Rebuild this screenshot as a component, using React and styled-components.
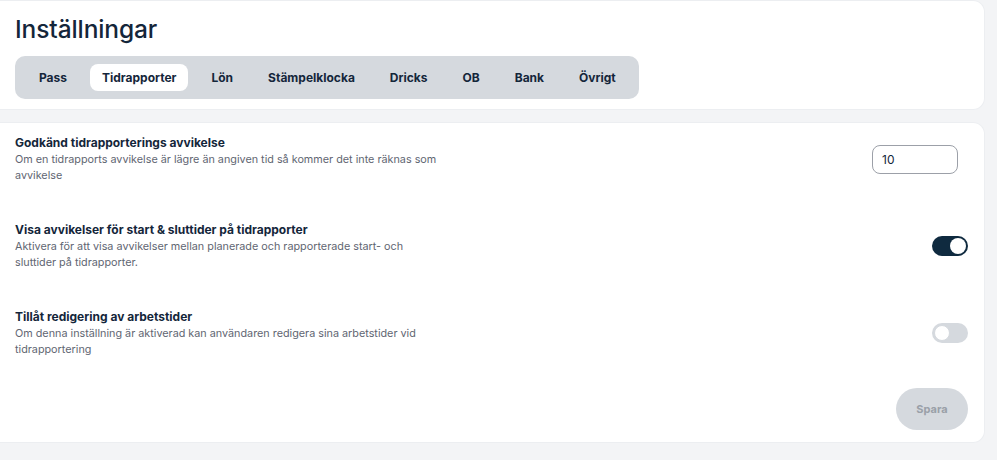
import React, { useState } from "react";
import styled, { createGlobalStyle } from "styled-components";

const tabs = ["Pass", "Tidrapporter", "Lön", "Stämpelklocka", "Dricks", "OB", "Bank", "Övrigt"];

const settings = [
  {
    id: "deviation",
    title: "Godkänd tidrapporterings avvikelse",
    desc: "Om en tidrapports avvikelse är lägre än angiven tid så kommer det inte räknas som avvikelse",
    type: "input",
  },
  {
    id: "showDeviations",
    title: "Visa avvikelser för start & sluttider på tidrapporter",
    desc: "Aktivera för att visa avvikelser mellan planerade och rapporterade start- och sluttider på tidrapporter.",
    type: "toggle",
  },
  {
    id: "allowEdit",
    title: "Tillåt redigering av arbetstider",
    desc: "Om denna inställning är aktiverad kan användaren redigera sina arbetstider vid tidrapportering",
    type: "toggle",
  },
];

function App() {
  const [active, setActive] = useState("Tidrapporter");
  const [values, setValues] = useState({ deviation: "10", showDeviations: true, allowEdit: false });

  return (
    <>
      <GlobalStyle />
      <Page>
        <HeaderCard>
          <Title>Inställningar</Title>
          <TabBar>
            {tabs.map((t) => (
              <Tab key={t} $active={t === active} onClick={() => setActive(t)}>
                {t}
              </Tab>
            ))}
          </TabBar>
        </HeaderCard>

        <SettingsCard>
          {settings.map((s) => (
            <Row key={s.id}>
              <Text>
                <RowTitle>{s.title}</RowTitle>
                <RowDesc>{s.desc}</RowDesc>
              </Text>
              {s.type === "input" ? (
                <NumberInput
                  value={values[s.id]}
                  onChange={(e) => setValues({ ...values, [s.id]: e.target.value })}
                />
              ) : (
                <Switch
                  $on={values[s.id]}
                  onClick={() => setValues({ ...values, [s.id]: !values[s.id] })}
                >
                  <Knob $on={values[s.id]} />
                </Switch>
              )}
            </Row>
          ))}
          <Footer>
            <SaveButton disabled>Spara</SaveButton>
          </Footer>
        </SettingsCard>
      </Page>
    </>
  );
}

export default App;

const GlobalStyle = createGlobalStyle`
  body {
    margin: 0;
    background: #f3f4f6;
    font-family: "Inter", "Liberation Sans", sans-serif;
    color: #14263a;
  }
`;

const Page = styled.div`
  display: flex;
  flex-direction: column;
  gap: 12px;
  padding: 0 12px 18px 0;
`;

const Card = styled.div`
  background: #fff;
  border: 1px solid #eceef1;
  border-left: none;
  border-radius: 0 12px 12px 0;
`;

const HeaderCard = styled(Card)`
  padding: 13px 15px 10px 15px;
`;

const Title = styled.h1`
  margin: 0 0 12px;
  font-size: 24.5px;
  line-height: 30px;
  font-weight: 500;
  color: #14263a;
  letter-spacing: -0.1px;
`;

const TabBar = styled.div`
  display: inline-flex;
  align-items: center;
  gap: 11px;
  padding: 8px 11px 8px 12px;
  background: #d5d9de;
  border-radius: 10px;
`;

const Tab = styled.button`
  border: none;
  height: 27px;
  padding: 0 12px;
  border-radius: 8px;
  background: ${(p) => (p.$active ? "#fff" : "transparent")};
  font-family: inherit;
  font-size: 12px;
  font-weight: 700;
  color: #14263a;
  cursor: pointer;
`;

const SettingsCard = styled(Card)`
  padding: 11px 16px 12px 15px;
  display: flex;
  flex-direction: column;
  gap: 37px;
`;

const Row = styled.div`
  display: flex;
  align-items: center;
  justify-content: space-between;
`;

const Text = styled.div`
  max-width: 428px;
`;

const RowTitle = styled.div`
  font-size: 12px;
  line-height: 18px;
  font-weight: 700;
  color: #14263a;
`;

const RowDesc = styled.div`
  font-size: 10.8px;
  line-height: 16px;
  color: #5f6672;
`;

const NumberInput = styled.input`
  width: 86px;
  height: 29px;
  box-sizing: border-box;
  margin-right: 10px;
  padding: 0 9px;
  border: 1px solid #9ca0a8;
  border-radius: 8px;
  font-family: inherit;
  font-size: 12px;
  color: #14263a;
  outline: none;
`;

const Switch = styled.button`
  position: relative;
  width: 36px;
  height: 20px;
  padding: 0;
  border: none;
  border-radius: 10px;
  background: ${(p) => (p.$on ? "#0f2a3f" : "#d5d9de")};
  cursor: pointer;
`;

const Knob = styled.span`
  position: absolute;
  top: 2px;
  left: ${(p) => (p.$on ? "18px" : "2px")};
  width: 16px;
  height: 16px;
  border-radius: 50%;
  background: #fff;
  box-sizing: border-box;
  border: ${(p) => (p.$on ? "none" : "1px solid #d5d9de")};
`;

const Footer = styled.div`
  display: flex;
  justify-content: flex-end;
  margin-top: -7px;
`;

const SaveButton = styled.button`
  width: 72px;
  height: 42px;
  border: none;
  border-radius: 21px;
  background: #d5d9de;
  color: #9aa0a8;
  font-family: inherit;
  font-size: 11px;
  font-weight: 700;
`;
